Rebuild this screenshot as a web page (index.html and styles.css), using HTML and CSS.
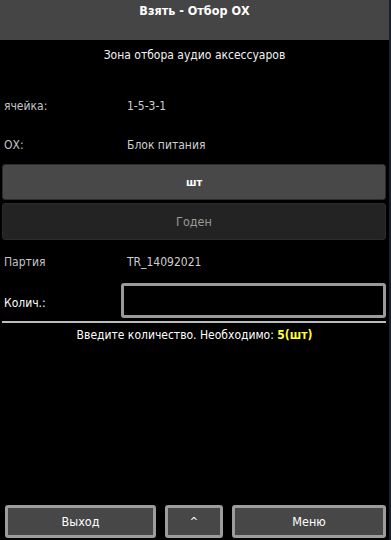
FILE: index.html
```html
<!DOCTYPE html>
<html lang="ru">
<head>
<meta charset="utf-8">
<link rel="stylesheet" href="styles.css">
</head>
<body>
<div class="screen">
  <header class="header"><div class="title">Взять - Отбор ОХ</div></header>
  <div class="subtitle">Зона отбора аудио аксессуаров</div>
  <div class="row r1"><span class="label">ячейка:</span><span class="value">1-5-3-1</span></div>
  <div class="row r2"><span class="label">ОХ:</span><span class="value">Блок питания</span></div>
  <div class="btn btn-unit">шт</div>
  <div class="btn btn-state">Годен</div>
  <div class="row r3"><span class="label">Партия</span><span class="value">TR_14092021</span></div>
  <div class="qty"><span class="qty-label">Колич.:</span><div class="input"></div></div>
  <div class="divider"></div>
  <div class="hint">Введите количество. Необходимо: <b class="need">5(шт)</b></div>
  <div class="footer">
    <div class="fbtn exit">Выход</div>
    <div class="fbtn up">^</div>
    <div class="fbtn menu">Меню</div>
  </div>
</div>
</body>
</html>
```
FILE: styles.css
```css
html, body { margin: 0; padding: 0; background: #000; }
body { font-family: "DejaVu Sans Condensed", "DejaVu Sans", "Liberation Sans", sans-serif; font-stretch: semi-condensed; font-size: 12px; color: #cfcfcf; }
.screen { width: 389px; height: 540px; display: flex; flex-direction: column; border-right: 2px solid #16202e; background: #000; }
.header { height: 40px; background: #454545; flex: none; }
.title { height: 21px; line-height: 21px; text-align: center; color: #fff; font-weight: bold; font-size: 12.5px; }
.subtitle { margin-top: 7px; height: 16px; line-height: 16px; text-align: center; color: #f2f2f2; font-size: 12px; }
.row { display: flex; align-items: center; height: 40px; flex: none; font-size: 12px; }
.r1 { margin-top: 23px; }
.r2 { height: 38px; }
.label { width: 127px; padding-left: 4px; box-sizing: border-box; color: #c4c4c4; }
.value { color: #cfcfcf; }
.btn { margin: 0 3px 0 2px; border: 1px solid #2c2c2c; border-radius: 3px; display: flex; align-items: center; justify-content: center; flex: none; }
.btn-unit { height: 34px; background: #484848; color: #fff; font-weight: bold; font-size: 11px; }
.btn-state { margin-top: 3px; height: 35px; background: #232323; color: #9a9a9a; font-size: 12.5px; }
.r3 { height: 43px; }
.qty { display: flex; align-items: center; height: 35px; flex: none; }
.qty-label { width: 121px; padding-left: 4px; padding-top: 4px; box-sizing: border-box; color: #fff; font-size: 12px; }
.input { width: 259px; height: 29px; border: 3px solid #9a9a9a; border-radius: 3px; background: #000; }
.divider { margin: 3px 3px 0 2px; height: 2px; background: #bdbdbd; flex: none; }
.hint { margin-top: 3px; height: 18px; line-height: 18px; text-align: center; color: #fff; font-size: 12px; }
.need { color: #ffff33; }
.footer { margin-top: auto; margin-bottom: 2px; display: flex; gap: 9px; padding: 0 3px 0 5px; }
.fbtn { height: 27px; border: 3px solid #9c9c9c; border-radius: 3px; background: #474747; color: #fff; display: flex; align-items: center; justify-content: center; font-size: 12.5px; }
.exit { width: 145px; }
.up { width: 52px; font-size: 11px; }
.menu { flex: 1; }
```
